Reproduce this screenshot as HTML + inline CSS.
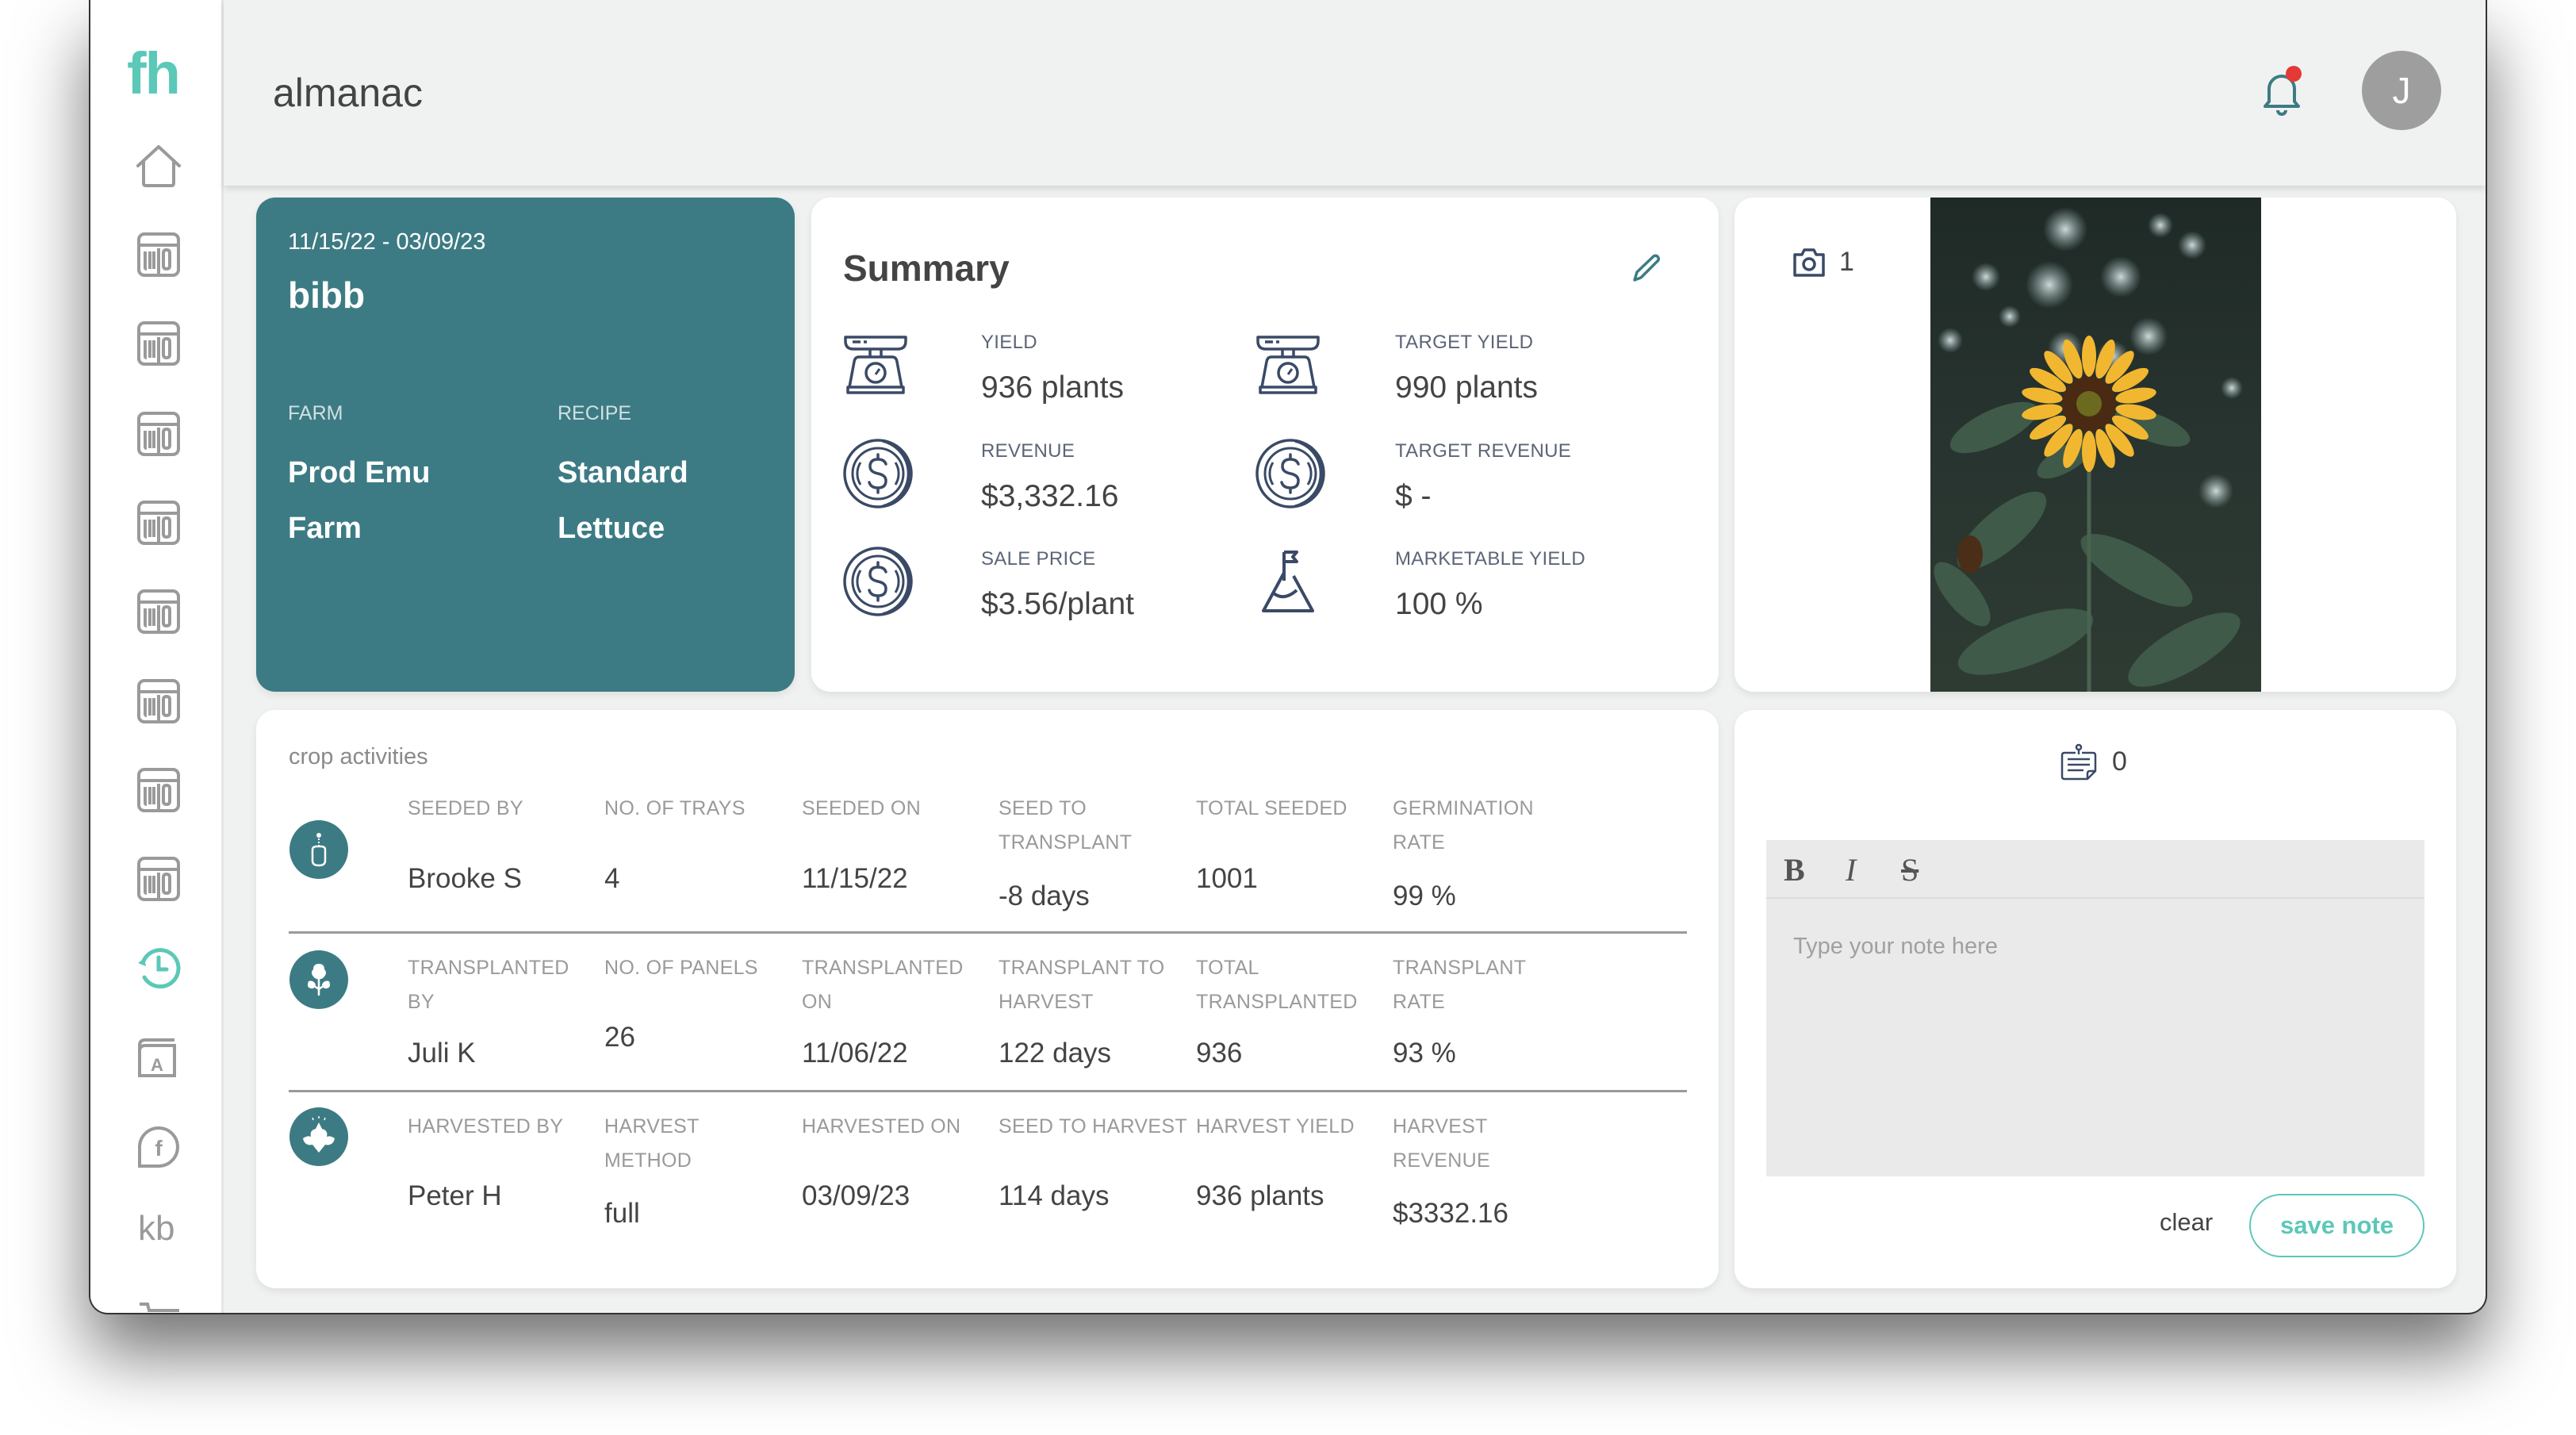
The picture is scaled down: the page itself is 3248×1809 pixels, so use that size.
<!DOCTYPE html>
<html><head><meta charset="utf-8">
<style>
*{box-sizing:border-box;margin:0;padding:0}
body{width:3248px;height:1809px;background:#fff;font-family:"Liberation Sans",sans-serif;position:relative;overflow:hidden}
.win{position:absolute;left:112px;top:0;width:3024px;height:1657px;background:#f0f2f1;border:2px solid #333;border-top:none;border-radius:0 0 24px 24px;box-shadow:0 50px 90px rgba(0,0,0,.55);overflow:hidden}
.side{position:absolute;left:0;top:0;width:168px;height:100%;background:#fff;border-right:3px solid #e4e6e5}
.hdr{position:absolute;left:168px;top:0;right:0;height:234px;background:#f0f2f1;box-shadow:0 4px 8px rgba(0,0,0,.12)}
.a{position:absolute}
.card{position:absolute;background:#fff;border-radius:24px;box-shadow:0 4px 10px rgba(0,0,0,.08)}
.lbl{position:absolute;font-size:25px;color:#9a9a9a;text-transform:uppercase;line-height:43px;letter-spacing:.3px}
.val{position:absolute;font-size:35px;color:#444}
.sl{position:absolute;font-size:24px;color:#5c6577;letter-spacing:.3px}
.sv{position:absolute;font-size:39px;color:#444}
.ico{position:absolute;transform:translate(-50%,-50%)}
</style></head><body>
<div class="win">
 <div class="side">
  <div class="a" style="left:46px;top:50px;font-size:74px;font-weight:bold;color:#5bc8b8;letter-spacing:-2px">fh</div>
  <svg class="ico" style="left:86px;top:209px" width="60" height="56" viewBox="0 0 60 56"><path d="M4 28 L30 4 L56 28 M11 22 V50 Q11 53 14 53 H46 Q49 53 49 50 V22" fill="none" stroke="#9a9a9a" stroke-width="4" stroke-linejoin="round" stroke-linecap="round"/></svg>
  <svg class="ico" style="left:86px;top:321px" width="54" height="56" viewBox="0 0 54 56"><rect x="2" y="2" width="50" height="52" rx="7" fill="none" stroke="#9a9a9a" stroke-width="4"/><path d="M2 16 H52 M27 20 V54 M10 24 V44 Q10 46 12 46 M16 24 V46 M21 24 V46 M33 26 Q33 22 37 22 Q41 22 41 26 V42 Q41 46 37 46 Q33 46 33 42 Z" fill="none" stroke="#9a9a9a" stroke-width="4"/></svg>
  <svg class="ico" style="left:86px;top:433px" width="54" height="56" viewBox="0 0 54 56"><rect x="2" y="2" width="50" height="52" rx="7" fill="none" stroke="#9a9a9a" stroke-width="4"/><path d="M2 16 H52 M27 20 V54 M10 24 V44 Q10 46 12 46 M16 24 V46 M21 24 V46 M33 26 Q33 22 37 22 Q41 22 41 26 V42 Q41 46 37 46 Q33 46 33 42 Z" fill="none" stroke="#9a9a9a" stroke-width="4"/></svg>
  <svg class="ico" style="left:86px;top:547px" width="54" height="56" viewBox="0 0 54 56"><rect x="2" y="2" width="50" height="52" rx="7" fill="none" stroke="#9a9a9a" stroke-width="4"/><path d="M2 16 H52 M27 20 V54 M10 24 V44 Q10 46 12 46 M16 24 V46 M21 24 V46 M33 26 Q33 22 37 22 Q41 22 41 26 V42 Q41 46 37 46 Q33 46 33 42 Z" fill="none" stroke="#9a9a9a" stroke-width="4"/></svg>
  <svg class="ico" style="left:86px;top:659px" width="54" height="56" viewBox="0 0 54 56"><rect x="2" y="2" width="50" height="52" rx="7" fill="none" stroke="#9a9a9a" stroke-width="4"/><path d="M2 16 H52 M27 20 V54 M10 24 V44 Q10 46 12 46 M16 24 V46 M21 24 V46 M33 26 Q33 22 37 22 Q41 22 41 26 V42 Q41 46 37 46 Q33 46 33 42 Z" fill="none" stroke="#9a9a9a" stroke-width="4"/></svg>
  <svg class="ico" style="left:86px;top:771px" width="54" height="56" viewBox="0 0 54 56"><rect x="2" y="2" width="50" height="52" rx="7" fill="none" stroke="#9a9a9a" stroke-width="4"/><path d="M2 16 H52 M27 20 V54 M10 24 V44 Q10 46 12 46 M16 24 V46 M21 24 V46 M33 26 Q33 22 37 22 Q41 22 41 26 V42 Q41 46 37 46 Q33 46 33 42 Z" fill="none" stroke="#9a9a9a" stroke-width="4"/></svg>
  <svg class="ico" style="left:86px;top:884px" width="54" height="56" viewBox="0 0 54 56"><rect x="2" y="2" width="50" height="52" rx="7" fill="none" stroke="#9a9a9a" stroke-width="4"/><path d="M2 16 H52 M27 20 V54 M10 24 V44 Q10 46 12 46 M16 24 V46 M21 24 V46 M33 26 Q33 22 37 22 Q41 22 41 26 V42 Q41 46 37 46 Q33 46 33 42 Z" fill="none" stroke="#9a9a9a" stroke-width="4"/></svg>
  <svg class="ico" style="left:86px;top:996px" width="54" height="56" viewBox="0 0 54 56"><rect x="2" y="2" width="50" height="52" rx="7" fill="none" stroke="#9a9a9a" stroke-width="4"/><path d="M2 16 H52 M27 20 V54 M10 24 V44 Q10 46 12 46 M16 24 V46 M21 24 V46 M33 26 Q33 22 37 22 Q41 22 41 26 V42 Q41 46 37 46 Q33 46 33 42 Z" fill="none" stroke="#9a9a9a" stroke-width="4"/></svg>
  <svg class="ico" style="left:86px;top:1108px" width="54" height="56" viewBox="0 0 54 56"><rect x="2" y="2" width="50" height="52" rx="7" fill="none" stroke="#9a9a9a" stroke-width="4"/><path d="M2 16 H52 M27 20 V54 M10 24 V44 Q10 46 12 46 M16 24 V46 M21 24 V46 M33 26 Q33 22 37 22 Q41 22 41 26 V42 Q41 46 37 46 Q33 46 33 42 Z" fill="none" stroke="#9a9a9a" stroke-width="4"/></svg>
  <svg class="ico" style="left:86px;top:1220px" width="56" height="56" viewBox="0 0 56 56"><path d="M8 22 A23 23 0 1 1 10 40" fill="none" stroke="#5bc8b8" stroke-width="5" stroke-linecap="round"/><path d="M2 22 L10 16 L12 26 Z" fill="#5bc8b8"/><path d="M28 15 V30 H38" fill="none" stroke="#5bc8b8" stroke-width="5" stroke-linecap="round"/></svg>
  <svg class="ico" style="left:84px;top:1334px" width="50" height="52" viewBox="0 0 50 52"><path d="M3 10 Q3 3 10 3 H47 M3 10 V48 H47 V10 H10 Q3 10 3 17" fill="none" stroke="#9a9a9a" stroke-width="4"/><text x="25" y="42" font-size="22" font-weight="bold" fill="#9a9a9a" text-anchor="middle" font-family="Liberation Sans">A</text></svg>
  <svg class="ico" style="left:86px;top:1446px" width="54" height="54" viewBox="0 0 54 54"><path d="M3 51 V26 A24 24 0 1 1 27 51 Z" fill="none" stroke="#9a9a9a" stroke-width="4"/><text x="27" y="38" font-size="28" font-weight="bold" fill="#9a9a9a" text-anchor="middle" font-family="Liberation Sans">f</text></svg>
  <div class="a" style="left:60px;top:1524px;font-size:44px;color:#9a9a9a">kb</div>
  <svg class="a" style="left:60px;top:1640px" width="56" height="20" viewBox="0 0 56 20"><path d="M2 4 H12 L14 12 H52" fill="none" stroke="#9a9a9a" stroke-width="4"/></svg>
 </div>
 <div class="hdr">
  <div class="a" style="left:62px;top:88px;font-size:50px;color:#444">almanac</div>
  <svg class="a" style="left:2565px;top:82px" width="60" height="66" viewBox="0 0 60 66"><path d="M14 46 V30 A16 16 0 0 1 46 30 V46 L51 52 H9 Z" fill="none" stroke="#3d7b84" stroke-width="4" stroke-linejoin="round"/><path d="M25 57 A5 5 0 0 0 35 57" fill="none" stroke="#3d7b84" stroke-width="4"/><circle cx="45" cy="11" r="10" fill="#e53935"/></svg>
  <div class="a" style="left:2696px;top:64px;width:100px;height:100px;border-radius:50%;background:#9e9e9e;color:#fff;font-size:46px;text-align:center;line-height:100px">J</div>
 </div>

 <div class="card" style="left:209px;top:249px;width:679px;height:623px;background:#3d7b84">
  <div class="a" style="left:40px;top:40px;font-size:29px;color:#fff">11/15/22 - 03/09/23</div>
  <div class="a" style="left:40px;top:96px;font-size:46px;color:#fff;font-weight:bold">bibb</div>
  <div class="a" style="left:40px;top:258px;font-size:25px;color:#cfe0e2">FARM</div>
  <div class="a" style="left:380px;top:258px;font-size:25px;color:#cfe0e2">RECIPE</div>
  <div class="a" style="left:40px;top:312px;font-size:38px;color:#fff;font-weight:bold;line-height:70px">Prod Emu<br>Farm</div>
  <div class="a" style="left:380px;top:312px;font-size:38px;color:#fff;font-weight:bold;line-height:70px">Standard<br>Lettuce</div>
 </div>

 <div class="card" style="left:909px;top:249px;width:1144px;height:623px">
  <div class="a" style="left:40px;top:62px;font-size:46px;color:#444;font-weight:bold">Summary</div>
  <svg class="a" style="left:1032px;top:70px" width="40" height="40" viewBox="0 0 40 40"><path d="M6 34 L9 24 L30 4 Q34 2 36 6 Q37 9 34 11 L14 31 Z" fill="none" stroke="#3d7b84" stroke-width="3.5" stroke-linejoin="round"/></svg>
 </div>
 <svg class="ico" style="left:990px;top:460px" width="82" height="76" viewBox="0 0 82 76"><path d="M3 3 H79 V8 Q79 18 69 18 H13 Q3 18 3 8 Z M12 9 H22 M26 9 H30 M34 18 V28 M48 18 V28 M20 28 H62 Q67 28 68 34 L74 66 H8 L14 34 Q15 28 20 28 Z M6 66 H76 V73 H6 Z" fill="none" stroke="#3a4a66" stroke-width="3.5" stroke-linejoin="round"/><circle cx="41" cy="48" r="12" fill="none" stroke="#3a4a66" stroke-width="3.5"/><path d="M41 50 L46 43" stroke="#3a4a66" stroke-width="3"/></svg>
 <svg class="ico" style="left:1510px;top:460px" width="82" height="76" viewBox="0 0 82 76"><path d="M3 3 H79 V8 Q79 18 69 18 H13 Q3 18 3 8 Z M12 9 H22 M26 9 H30 M34 18 V28 M48 18 V28 M20 28 H62 Q67 28 68 34 L74 66 H8 L14 34 Q15 28 20 28 Z M6 66 H76 V73 H6 Z" fill="none" stroke="#3a4a66" stroke-width="3.5" stroke-linejoin="round"/><circle cx="41" cy="48" r="12" fill="none" stroke="#3a4a66" stroke-width="3.5"/><path d="M41 50 L46 43" stroke="#3a4a66" stroke-width="3"/></svg>
 <svg class="ico" style="left:997px;top:597px" width="96" height="96" viewBox="0 0 96 96"><circle cx="44" cy="48" r="42" fill="none" stroke="#3a4a66" stroke-width="3.5"/><path d="M50 7 A42 42 0 0 1 50 89 M56 9 A42 42 0 0 1 56 87" fill="none" stroke="#3a4a66" stroke-width="3.5"/><circle cx="44" cy="48" r="32" fill="none" stroke="#3a4a66" stroke-width="3"/><path d="M22 34 A26 26 0 0 0 22 62 M66 34 A26 26 0 0 1 66 62" fill="none" stroke="#3a4a66" stroke-width="3"/><path d="M54 36 Q52 30 44 30 Q34 30 34 39 Q34 46 44 48 Q54 50 54 57 Q54 66 44 66 Q35 66 33 59 M44 24 V30 M44 66 V72" fill="none" stroke="#3a4a66" stroke-width="3.5" stroke-linecap="round"/></svg>
 <svg class="ico" style="left:1517px;top:597px" width="96" height="96" viewBox="0 0 96 96"><circle cx="44" cy="48" r="42" fill="none" stroke="#3a4a66" stroke-width="3.5"/><path d="M50 7 A42 42 0 0 1 50 89 M56 9 A42 42 0 0 1 56 87" fill="none" stroke="#3a4a66" stroke-width="3.5"/><circle cx="44" cy="48" r="32" fill="none" stroke="#3a4a66" stroke-width="3"/><path d="M22 34 A26 26 0 0 0 22 62 M66 34 A26 26 0 0 1 66 62" fill="none" stroke="#3a4a66" stroke-width="3"/><path d="M54 36 Q52 30 44 30 Q34 30 34 39 Q34 46 44 48 Q54 50 54 57 Q54 66 44 66 Q35 66 33 59 M44 24 V30 M44 66 V72" fill="none" stroke="#3a4a66" stroke-width="3.5" stroke-linecap="round"/></svg>
 <svg class="ico" style="left:997px;top:733px" width="96" height="96" viewBox="0 0 96 96"><circle cx="44" cy="48" r="42" fill="none" stroke="#3a4a66" stroke-width="3.5"/><path d="M50 7 A42 42 0 0 1 50 89 M56 9 A42 42 0 0 1 56 87" fill="none" stroke="#3a4a66" stroke-width="3.5"/><circle cx="44" cy="48" r="32" fill="none" stroke="#3a4a66" stroke-width="3"/><path d="M22 34 A26 26 0 0 0 22 62 M66 34 A26 26 0 0 1 66 62" fill="none" stroke="#3a4a66" stroke-width="3"/><path d="M54 36 Q52 30 44 30 Q34 30 34 39 Q34 46 44 48 Q54 50 54 57 Q54 66 44 66 Q35 66 33 59 M44 24 V30 M44 66 V72" fill="none" stroke="#3a4a66" stroke-width="3.5" stroke-linecap="round"/></svg>
 <svg class="ico" style="left:1510px;top:733px" width="70" height="82" viewBox="0 0 70 82"><path d="M30 4 V40 M30 4 H46 L41 10 L46 16 H30 M30 30 L4 78 H66 L42 34 M17 56 Q30 66 46 52" fill="none" stroke="#3a4a66" stroke-width="4" stroke-linejoin="round"/></svg>
 <div class="sl" style="left:1123px;top:418px">YIELD</div>
 <div class="sv" style="left:1123px;top:467px">936 plants</div>
 <div class="sl" style="left:1123px;top:555px">REVENUE</div>
 <div class="sv" style="left:1123px;top:604px">$3,332.16</div>
 <div class="sl" style="left:1123px;top:691px">SALE PRICE</div>
 <div class="sv" style="left:1123px;top:740px">$3.56/plant</div>
 <div class="sl" style="left:1645px;top:418px">TARGET YIELD</div>
 <div class="sv" style="left:1645px;top:467px">990 plants</div>
 <div class="sl" style="left:1645px;top:555px">TARGET REVENUE</div>
 <div class="sv" style="left:1645px;top:604px">$ -</div>
 <div class="sl" style="left:1645px;top:691px">MARKETABLE YIELD</div>
 <div class="sv" style="left:1645px;top:740px">100 %</div>

 <div class="card" style="left:2073px;top:249px;width:910px;height:623px;overflow:hidden">
  <svg class="a" style="left:247px;top:0" width="417" height="623" viewBox="0 0 417 623">
   <defs><radialGradient id="bk"><stop offset="0" stop-color="#dfeceb" stop-opacity=".9"/><stop offset="1" stop-color="#9fb9b9" stop-opacity="0"/></radialGradient>
   <linearGradient id="bg" x1="0" y1="0" x2="0" y2="1"><stop offset="0" stop-color="#1f2a27"/><stop offset=".5" stop-color="#28342f"/><stop offset="1" stop-color="#2e3b33"/></linearGradient></defs>
   <rect width="417" height="623" fill="url(#bg)"/>
   <g fill="url(#bk)"><circle cx="170" cy="40" r="28"/><circle cx="240" cy="100" r="26"/><circle cx="150" cy="110" r="30"/><circle cx="70" cy="100" r="18"/><circle cx="25" cy="180" r="16"/><circle cx="170" cy="190" r="22"/><circle cx="275" cy="175" r="24"/><circle cx="230" cy="200" r="20"/><circle cx="330" cy="60" r="18"/><circle cx="380" cy="240" r="14"/><circle cx="360" cy="370" r="22"/><circle cx="100" cy="150" r="14"/><circle cx="290" cy="35" r="16"/></g>
   <g fill="#3f5a48"><ellipse cx="80" cy="290" rx="60" ry="22" transform="rotate(-25 80 290)"/><ellipse cx="280" cy="290" rx="50" ry="18" transform="rotate(20 280 290)"/><ellipse cx="90" cy="420" rx="70" ry="26" transform="rotate(-40 90 420)"/><ellipse cx="260" cy="470" rx="80" ry="26" transform="rotate(30 260 470)"/><ellipse cx="120" cy="560" rx="90" ry="30" transform="rotate(-20 120 560)"/><ellipse cx="320" cy="570" rx="80" ry="28" transform="rotate(-30 320 570)"/><ellipse cx="40" cy="500" rx="50" ry="20" transform="rotate(50 40 500)"/><ellipse cx="170" cy="330" rx="40" ry="16" transform="rotate(-30 170 330)"/></g>
   <path d="M200 330 V623" stroke="#4a6350" stroke-width="5"/>
   <g fill="#f2b730" transform="translate(200 260)">
    <g id="pt"><ellipse cx="0" cy="-60" rx="9" ry="26"/></g>
    <use href="#pt" transform="rotate(20)"/><use href="#pt" transform="rotate(40)"/><use href="#pt" transform="rotate(60)"/><use href="#pt" transform="rotate(80)"/><use href="#pt" transform="rotate(100)"/><use href="#pt" transform="rotate(120)"/><use href="#pt" transform="rotate(140)"/><use href="#pt" transform="rotate(160)"/><use href="#pt" transform="rotate(180)"/><use href="#pt" transform="rotate(200)"/><use href="#pt" transform="rotate(220)"/><use href="#pt" transform="rotate(240)"/><use href="#pt" transform="rotate(260)"/><use href="#pt" transform="rotate(280)"/><use href="#pt" transform="rotate(300)"/><use href="#pt" transform="rotate(320)"/><use href="#pt" transform="rotate(340)"/>
    <circle r="34" fill="#4a2a12"/><circle r="16" fill="#6b6a1e"/>
   </g>
   <ellipse cx="50" cy="450" rx="16" ry="24" fill="#4a2e18"/>
  </svg>
  <svg class="a" style="left:72px;top:62px" width="44" height="40" viewBox="0 0 44 40"><path d="M4 10 H13 L16 4 H28 L31 10 H40 V36 H4 Z" fill="none" stroke="#3a4a66" stroke-width="3.5" stroke-linejoin="round"/><circle cx="22" cy="22" r="7" fill="none" stroke="#3a4a66" stroke-width="3.5"/></svg>
  <div class="a" style="left:132px;top:62px;font-size:34px;color:#444">1</div>
 </div>

 <div class="card" style="left:209px;top:895px;width:1844px;height:729px">
  <div class="a" style="left:41px;top:43px;font-size:29px;color:#8a8a8a">crop activities</div>
  <div class="a" style="left:41px;top:279px;width:1763px;height:3px;background:#9a9a9a"></div>
  <div class="a" style="left:41px;top:479px;width:1763px;height:3px;background:#9a9a9a"></div>
 </div>
 <svg class="ico" style="left:288px;top:1071px" width="76" height="76" viewBox="0 0 76 76"><circle cx="38" cy="38" r="37" fill="#3d7b84"/><circle cx="38" cy="20" r="3" fill="#fff"/><path d="M38 24 V34" stroke="#fff" stroke-width="2" stroke-dasharray="2 2"/><path d="M30 38 Q30 34 36 34 H40 Q46 34 46 38 V52 Q46 58 38 58 Q30 58 30 52 Z" fill="none" stroke="#fff" stroke-width="2.5"/></svg>
 <svg class="ico" style="left:288px;top:1235px" width="76" height="76" viewBox="0 0 76 76"><circle cx="38" cy="38" r="37" fill="#3d7b84"/><path d="M38 18 Q45 18 45 25 Q49 29 45 34 Q42 38 38 37 Q34 38 31 34 Q27 29 31 25 Q31 18 38 18 Z M25 40 Q31 38 34 44 Q33 50 28 49 Q22 48 25 40 Z M51 40 Q45 38 42 44 Q43 50 48 49 Q54 48 51 40 Z" fill="#fff"/><path d="M38 36 V58 M38 50 L31 45 M38 50 L45 45" stroke="#fff" stroke-width="2.5"/></svg>
 <svg class="ico" style="left:288px;top:1433px" width="76" height="76" viewBox="0 0 76 76"><circle cx="38" cy="38" r="37" fill="#3d7b84"/><path d="M38 58 L30 48 Q20 50 18 40 Q24 36 28 38 Q26 30 34 28 L38 20 L42 28 Q50 30 48 38 Q52 36 58 40 Q56 50 46 48 Z" fill="#fff"/><path d="M30 14 L31 17 M38 12 V15 M46 14 L45 17" stroke="#fff" stroke-width="1.5"/></svg>

 <div class="lbl" style="left:400px;top:998px">SEEDED BY</div><div class="val" style="left:400px;top:1088px">Brooke S</div>
 <div class="lbl" style="left:648px;top:998px">NO. OF TRAYS</div><div class="val" style="left:648px;top:1088px">4</div>
 <div class="lbl" style="left:897px;top:998px">SEEDED ON</div><div class="val" style="left:897px;top:1088px">11/15/22</div>
 <div class="lbl" style="left:1145px;top:998px">SEED TO<br>TRANSPLANT</div><div class="val" style="left:1145px;top:1110px">-8 days</div>
 <div class="lbl" style="left:1394px;top:998px">TOTAL SEEDED</div><div class="val" style="left:1394px;top:1088px">1001</div>
 <div class="lbl" style="left:1642px;top:998px">GERMINATION<br>RATE</div><div class="val" style="left:1642px;top:1110px">99 %</div>

 <div class="lbl" style="left:400px;top:1199px">TRANSPLANTED<br>BY</div><div class="val" style="left:400px;top:1308px">Juli K</div>
 <div class="lbl" style="left:648px;top:1199px">NO. OF PANELS</div><div class="val" style="left:648px;top:1288px">26</div>
 <div class="lbl" style="left:897px;top:1199px">TRANSPLANTED<br>ON</div><div class="val" style="left:897px;top:1308px">11/06/22</div>
 <div class="lbl" style="left:1145px;top:1199px">TRANSPLANT TO<br>HARVEST</div><div class="val" style="left:1145px;top:1308px">122 days</div>
 <div class="lbl" style="left:1394px;top:1199px">TOTAL<br>TRANSPLANTED</div><div class="val" style="left:1394px;top:1308px">936</div>
 <div class="lbl" style="left:1642px;top:1199px">TRANSPLANT<br>RATE</div><div class="val" style="left:1642px;top:1308px">93 %</div>

 <div class="lbl" style="left:400px;top:1399px">HARVESTED BY</div><div class="val" style="left:400px;top:1488px">Peter H</div>
 <div class="lbl" style="left:648px;top:1399px">HARVEST<br>METHOD</div><div class="val" style="left:648px;top:1510px">full</div>
 <div class="lbl" style="left:897px;top:1399px">HARVESTED ON</div><div class="val" style="left:897px;top:1488px">03/09/23</div>
 <div class="lbl" style="left:1145px;top:1399px">SEED TO HARVEST</div><div class="val" style="left:1145px;top:1488px">114 days</div>
 <div class="lbl" style="left:1394px;top:1399px">HARVEST YIELD</div><div class="val" style="left:1394px;top:1488px">936 plants</div>
 <div class="lbl" style="left:1642px;top:1399px">HARVEST<br>REVENUE</div><div class="val" style="left:1642px;top:1510px">$3332.16</div>

 <div class="card" style="left:2073px;top:895px;width:910px;height:729px">
  <svg class="a" style="left:410px;top:42px" width="48" height="48" viewBox="0 0 48 48"><circle cx="24" cy="5" r="3" fill="none" stroke="#3a4a66" stroke-width="2.5"/><path d="M24 8 V14 M20 12 H6 Q3 12 3 15 V42 Q3 45 6 45 H35 L45 35 V15 Q45 12 42 12 H28 M35 45 V38 Q35 35 38 35 H45 M10 20 H38 M10 27 H38 M10 34 H30" fill="none" stroke="#3a4a66" stroke-width="2.5" stroke-linejoin="round"/></svg>
  <div class="a" style="left:476px;top:46px;font-size:34px;color:#444">0</div>
  <div class="a" style="left:40px;top:164px;width:830px;height:424px;background:#eaeaea">
   <div class="a" style="left:0;top:0;width:830px;height:74px;border-bottom:2px solid #dcdcdc"></div>
   <div class="a" style="left:22px;top:14px;font-family:'Liberation Serif',serif;font-weight:bold;font-size:40px;color:#555">B</div>
   <div class="a" style="left:100px;top:14px;font-family:'Liberation Serif',serif;font-style:italic;font-size:40px;color:#555">I</div>
   <div class="a" style="left:170px;top:14px;font-family:'Liberation Serif',serif;font-size:40px;color:#555;text-decoration:line-through">S</div>
   <div class="a" style="left:34px;top:118px;font-size:29px;color:#a0a0a0">Type your note here</div>
  </div>
  <div class="a" style="left:536px;top:628px;font-size:31px;color:#444">clear</div>
  <div class="a" style="left:649px;top:610px;width:221px;height:80px;border:2.5px solid #5bc8b8;border-radius:40px;color:#5bc8b8;font-size:31px;font-weight:bold;text-align:center;line-height:75px">save note</div>
 </div>
</div>
</body></html>
